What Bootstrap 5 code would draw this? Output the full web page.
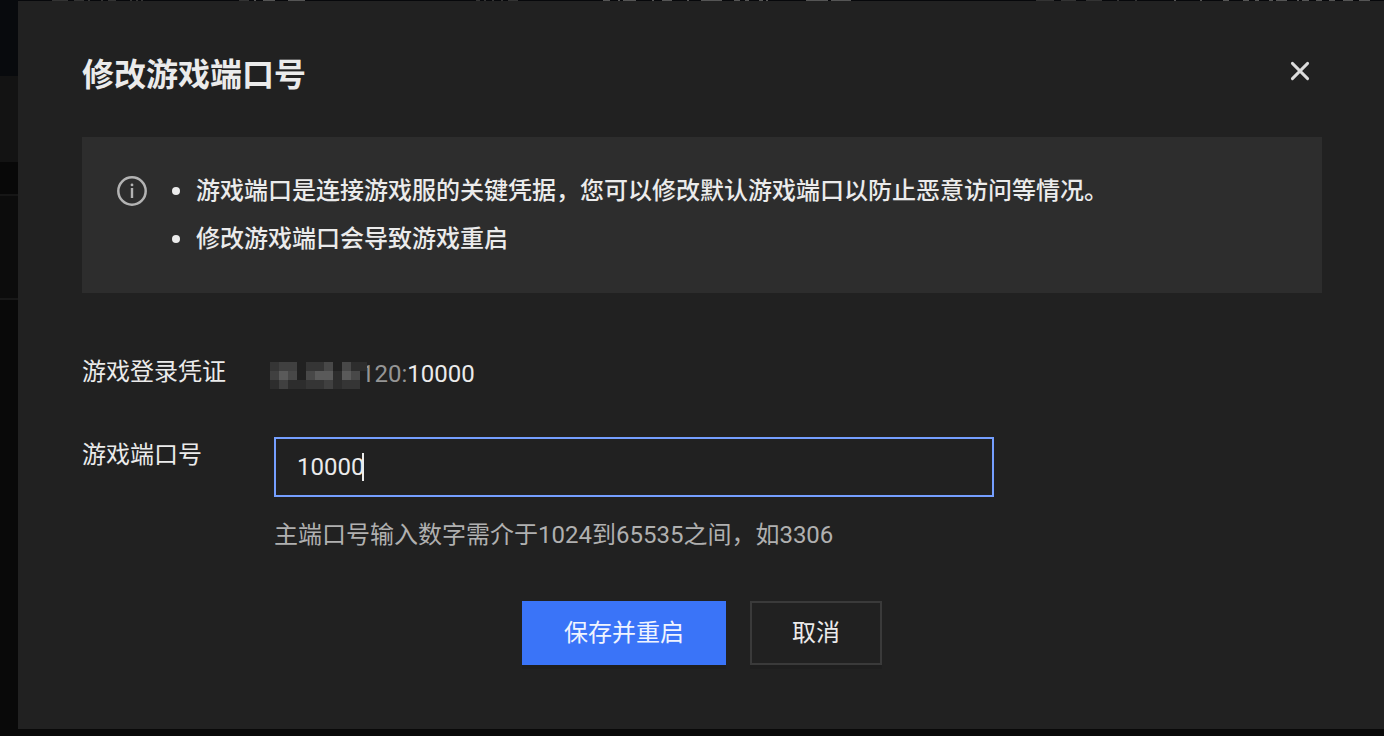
<!DOCTYPE html>
<html lang="zh-CN">
<head>
<meta charset="utf-8">
<meta name="viewport" content="width=device-width, initial-scale=1">
<title>修改游戏端口号</title>
<link href="https://cdn.jsdelivr.net/npm/bootstrap@5.3.0/dist/css/bootstrap.min.css" rel="stylesheet">
<style>
body { background: #090909; color: #ebebeb; font-family: Roboto, "Noto Sans CJK SC", sans-serif; font-size: 24px; line-height: 36px; }
/* dimmed page behind the dialog */
.backdrop-rail { width: 18px; }
.rail-top { height: 76px; background: #080a0d; }
.rail-bar { height: 86px; background: #131313; }
.rail-gap { height: 32px; background: #080808; }
.rail-row { height: 106px; background: #0c0c0c; border-top: 2px solid #161616; border-bottom: 2px solid #181818; }
.backdrop-line { height: 1px; background: #07080b; }
/* dialog */
.dialog-panel { background: #212121; padding: 48px 62px 64px 64px; }
.dialog-title { font-size: 32px; line-height: 48px; font-weight: 700; padding-top: 2px; }
.dialog-close { width: 44px; height: 44px; color: #dcdcdc; }
.notice { background: #2d2d2d; margin-top: 38px; padding: 30px 34px; font-weight: 500; }
.notice-icon { margin-top: 8px; color: #b3b3b3; }
.notice-list { padding-left: 0; margin-left: 24px; list-style: none; }
.notice-list li { line-height: 48px; display: flex; align-items: center; gap: 16px; }
.notice-list li::before { content: ""; width: 8px; height: 8px; border-radius: 50%; background: #ebebeb; flex: none; }
.form-rows { margin-top: 61px; }
.field-label { width: 192px; flex: none; }
.mosaic { left: -4px; top: 8px; }
.address { padding-left: 87px; padding-top: 2px; color: #959595; }
.address b { font-weight: 400; color: #ebebeb; }
.port-row { margin-top: 45px; }
.port-box { max-width: 720px; }
.port-input { height: 60px; padding: 0 21px; font-size: 24px; border: 2px solid #759fff; caret-color: transparent; }
.port-input, .port-input:focus { background: #212121; color: #ebebeb; border-color: #759fff; box-shadow: none; }
.caret-mark { left: 88px; top: 16px; width: 2px; height: 28px; background: #ebebeb; }
.port-help { margin-top: 20px; color: #b0b0b0; }
.dialog-actions { margin-top: 48px; gap: 24px; }
.dialog-btn { height: 64px; padding: 0 40px; font-size: 24px; border-width: 2px; color: #ebebeb; box-shadow: 0 4px 0 #1e1e1e; }
.btn-save, .btn-save:hover { background: #3a74f8; border-color: #3a74f8; color: #f0f4ff; }
.btn-cancel, .btn-cancel:hover { background: #212121; border-color: #3a3a3a; color: #ebebeb; }
</style>
</head>
<body>
<div class="d-flex min-vh-100">
  <div class="backdrop-rail flex-shrink-0" aria-hidden="true">
    <div class="rail-top"></div>
    <div class="rail-bar"></div>
    <div class="rail-gap"></div>
    <div class="rail-row"></div>
  </div>
  <div class="flex-grow-1">
    <svg class="backdrop-line d-block w-100" viewBox="0 0 1366 1" preserveAspectRatio="none" aria-hidden="true">
      <path d="M34 .5h16M56 .5h10M70 .5h2M83 .5h2M90 .5h8M112 .5h2M118 .5h2M123 .5h2M221 .5h10M458 .5h4M466 .5h2M474 .5h2M483 .5h2M490 .5h10M1018 .5h18M1043 .5h15M1068 .5h16M1099 .5h2M1117 .5h2" stroke="#333"/>
      <path d="M236 .5h2M245 .5h12M270 .5h17M585 .5h7M600 .5h2M605 .5h13M634 .5h2M644 .5h10M669 .5h2M683 .5h21M716 .5h6M727 .5h4M741 .5h4M748 .5h2M788 .5h22M813 .5h20M1156 .5h2M1182 .5h2M1205 .5h6M1225 .5h6M1237 .5h4M1251 .5h4M1258 .5h11M1279 .5h2M1284 .5h7M1298 .5h6M1311 .5h6M1325 .5h10M1341 .5h11" stroke="#555"/>
    </svg>
    <main class="dialog-panel" role="dialog" aria-labelledby="dialogTitle">
      <header class="d-flex justify-content-between align-items-start">
        <h1 class="dialog-title mb-0" id="dialogTitle">修改游戏端口号</h1>
        <button type="button" class="dialog-close btn p-0 border-0 d-flex align-items-center justify-content-center" aria-label="关闭">
          <svg width="20" height="20" viewBox="0 0 20 20" fill="none" stroke="currentColor" stroke-width="2.9" stroke-linecap="round"><path d="M2.4 2.4l15.2 15.2M17.6 2.4L2.4 17.6"/></svg>
        </button>
      </header>

      <section class="notice d-flex align-items-start">
        <svg class="notice-icon flex-shrink-0" width="32" height="32" viewBox="0 0 32 32" fill="none" stroke="currentColor"><circle cx="16" cy="16" r="13.7" stroke-width="2.5"/><path d="M16 13v10" stroke-width="2.4"/><circle cx="16" cy="9.9" r="1.4" fill="currentColor" stroke="none"/></svg>
        <ul class="notice-list mb-0">
          <li>游戏端口是连接游戏服的关键凭据，您可以修改默认游戏端口以防止恶意访问等情况。</li>
          <li>修改游戏端口会导致游戏重启</li>
        </ul>
      </section>

      <form class="form-rows">
        <div class="d-flex">
          <div class="field-label">游戏登录凭证</div>
          <div class="position-relative">
            <div class="address">120:<b>10000</b></div>
            <svg class="mosaic position-absolute" width="98" height="27" viewBox="0 0 98 27" shape-rendering="crispEdges" aria-hidden="true">
              <path fill="#212121" d="M0 0h97v9h-2v18h-95z"/>
              <path fill="#353535" d="M0 0h9v9h-9zM36 0h18v9h-18zM36 18h18v9h-18zM72 18h18v9h-18z"/>
              <path fill="#404040" d="M9 0h18v9h-18zM0 9h9v9h-9zM9 18h9v9h-9zM54 18h9v9h-9z"/>
              <path fill="#484848" d="M54 0h9v9h-9zM72 0h9v9h-9zM18 9h9v9h-9zM36 9h9v9h-9zM81 9h9v9h-9z"/>
              <path fill="#5a5a5a" d="M9 9h9v9h-9zM45 9h18v9h-18zM72 9h9v9h-9z"/>
              <path fill="#2d2d2d" d="M81 0h16v9h-16zM63 9h9v18h-9zM0 18h9v9h-9zM18 18h18v9h-18z"/>
            </svg>
          </div>
        </div>
        <div class="port-row d-flex">
          <label class="field-label" for="port">游戏端口号</label>
          <div class="port-box position-relative flex-grow-1">
            <input class="port-input form-control rounded-0" id="port" type="text" inputmode="numeric" value="10000" aria-describedby="portHelp">
            <span class="caret-mark position-absolute" aria-hidden="true"></span>
          </div>
        </div>
        <div class="port-help d-flex">
          <div class="field-label"></div>
          <div id="portHelp">主端口号输入数字需介于1024到65535之间，如3306</div>
        </div>
        <div class="dialog-actions d-flex justify-content-center">
          <button type="submit" class="dialog-btn btn btn-save rounded-0">保存并重启</button>
          <button type="button" class="dialog-btn btn btn-cancel rounded-0">取消</button>
        </div>
      </form>
    </main>
  </div>
</div>
<script src="https://cdn.jsdelivr.net/npm/bootstrap@5.3.0/dist/js/bootstrap.bundle.min.js"></script>
</body>
</html>
